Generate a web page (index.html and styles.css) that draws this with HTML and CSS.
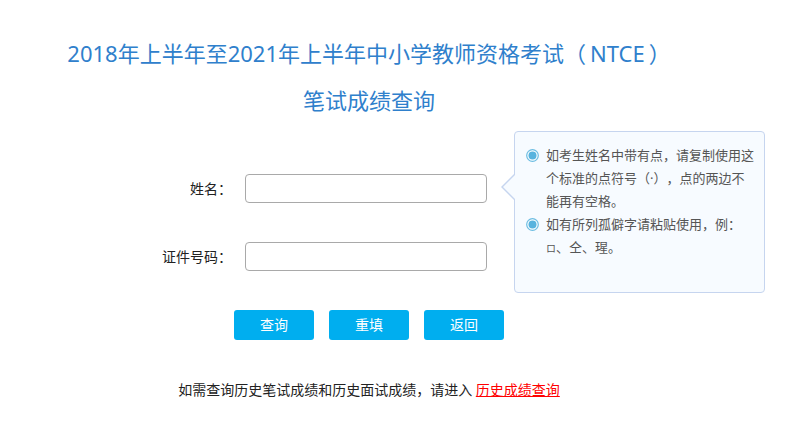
FILE: index.html
```html
<!DOCTYPE html>
<html lang="zh-CN">
<head>
<meta charset="utf-8">
<title>笔试成绩查询</title>
<link rel="stylesheet" href="styles.css">
</head>
<body>
<div class="page">
  <h1 class="title">2018年上半年至2021年上半年中小学教师资格考试<span class="po">（</span>NTCE<span class="pc">）</span></h1>
  <h2 class="subtitle">笔试成绩查询</h2>

  <div class="main">
    <form class="form">
      <label class="label" for="name">姓名<span class="p">：</span></label>
      <input class="field" id="name" type="text">
      <label class="label" for="idno">证件号码<span class="p">：</span></label>
      <input class="field" id="idno" type="text">
    </form>

    <div class="tip">
      <div class="tip-item">
        <svg class="dot" width="13" height="13" viewBox="0 0 13 13"><circle cx="6.5" cy="6.5" r="5.8" fill="#fff" stroke="#6cbde2" stroke-width="1.2"/><circle cx="6.5" cy="6.5" r="4" fill="#58b3de"/></svg>
        <p class="tip-text">如考生姓名中带有点<span class="p">，</span>请复制使用这个标准的点符号（·）<span class="p">，</span>点的两边不能再有空格。</p>
      </div>
      <div class="tip-item">
        <svg class="dot" width="13" height="13" viewBox="0 0 13 13"><circle cx="6.5" cy="6.5" r="5.8" fill="#fff" stroke="#6cbde2" stroke-width="1.2"/><circle cx="6.5" cy="6.5" r="4" fill="#58b3de"/></svg>
        <p class="tip-text">如有所列孤僻字请粘贴使用<span class="p">，</span>例<span class="p">：</span><span class="small">ロ</span>、仝、瑆。</p>
      </div>
    </div>
  </div>

  <div class="buttons">
    <button class="btn" type="button">查询</button>
    <button class="btn" type="button">重填</button>
    <button class="btn" type="button">返回</button>
  </div>

  <p class="footer">如需查询历史笔试成绩和历史面试成绩<span class="p">，</span>请进入 <a class="link" href="#">历史成绩查询</a></p>
</div>
</body>
</html>
```

FILE: styles.css
```css
html, body {
  margin: 0;
  padding: 0;
  background: #ffffff;
}

body {
  font-family: "Noto Sans", "Noto Sans CJK SC", sans-serif;
  color: #222;
  text-spacing-trim: space-all;
}

.page {
  width: 738px;
}

.p {
  font-family: "Noto Sans CJK TC", sans-serif;
  line-height: 1;
}

.po {
  margin-right: 4px;
}

.pc {
  margin-left: 4px;
}

.title {
  margin: 0;
  padding-top: 38px;
  font-size: 22px;
  line-height: 30px;
  font-weight: normal;
  color: #2f80cc;
  text-align: center;
}

.subtitle {
  margin: 17px 0 0;
  font-size: 22px;
  line-height: 30px;
  font-weight: normal;
  color: #2f80cc;
  text-align: center;
}

.main {
  margin-top: 16px;
  display: flex;
  padding-left: 150px;
}

.form {
  margin: 0;
  padding-top: 43px;
  display: grid;
  grid-template-columns: 82px 242px;
  column-gap: 13px;
  row-gap: 39px;
  align-items: center;
  align-content: start;
}

.label {
  text-align: right;
  font-size: 14px;
  line-height: 20px;
  color: #222;
}

.field {
  box-sizing: border-box;
  width: 242px;
  height: 29px;
  margin: 0;
  border: 1px solid #a9a9a9;
  border-radius: 4px;
  background: #fff;
  padding: 0 6px;
  font-size: 14px;
}

.tip {
  position: relative;
  box-sizing: border-box;
  margin-left: 27px;
  width: 251px;
  height: 162px;
  padding: 12px 8px 0 11px;
  background: #f7fbff;
  border: 1px solid #c6d5ef;
  border-radius: 4px;
}

.tip::before,
.tip::after {
  content: "";
  position: absolute;
  top: 41px;
  width: 0;
  height: 0;
  border-style: solid;
  border-color: transparent;
}

.tip::before {
  left: -14px;
  border-width: 14px 14px 14px 0;
  border-right-color: #c6d5ef;
}

.tip::after {
  left: -12px;
  top: 42px;
  border-width: 13px 13px 13px 0;
  border-right-color: #f7fbff;
}

.tip-item {
  display: flex;
  align-items: flex-start;
  gap: 7px;
}

.dot {
  flex: none;
  margin-top: 5px;
}

.tip-text {
  margin: 0;
  width: 212px;
  font-size: 13px;
  line-height: 23px;
  color: #555;
}

.small {
  font-size: 10px;
}

.buttons {
  margin-top: 17px;
  display: flex;
  justify-content: center;
  gap: 15px;
}

.btn {
  width: 80px;
  height: 30px;
  margin: 0;
  padding: 0;
  border: none;
  border-radius: 3px;
  background: #00aeef;
  color: #fff;
  font-family: "Noto Sans", "Noto Sans CJK SC", sans-serif;
  font-size: 14px;
  line-height: 30px;
}

.footer {
  margin: 40px 0 0;
  text-align: center;
  font-size: 14px;
  line-height: 20px;
  color: #222;
}

.link {
  color: #ff0000;
  text-decoration: underline;
}
```
